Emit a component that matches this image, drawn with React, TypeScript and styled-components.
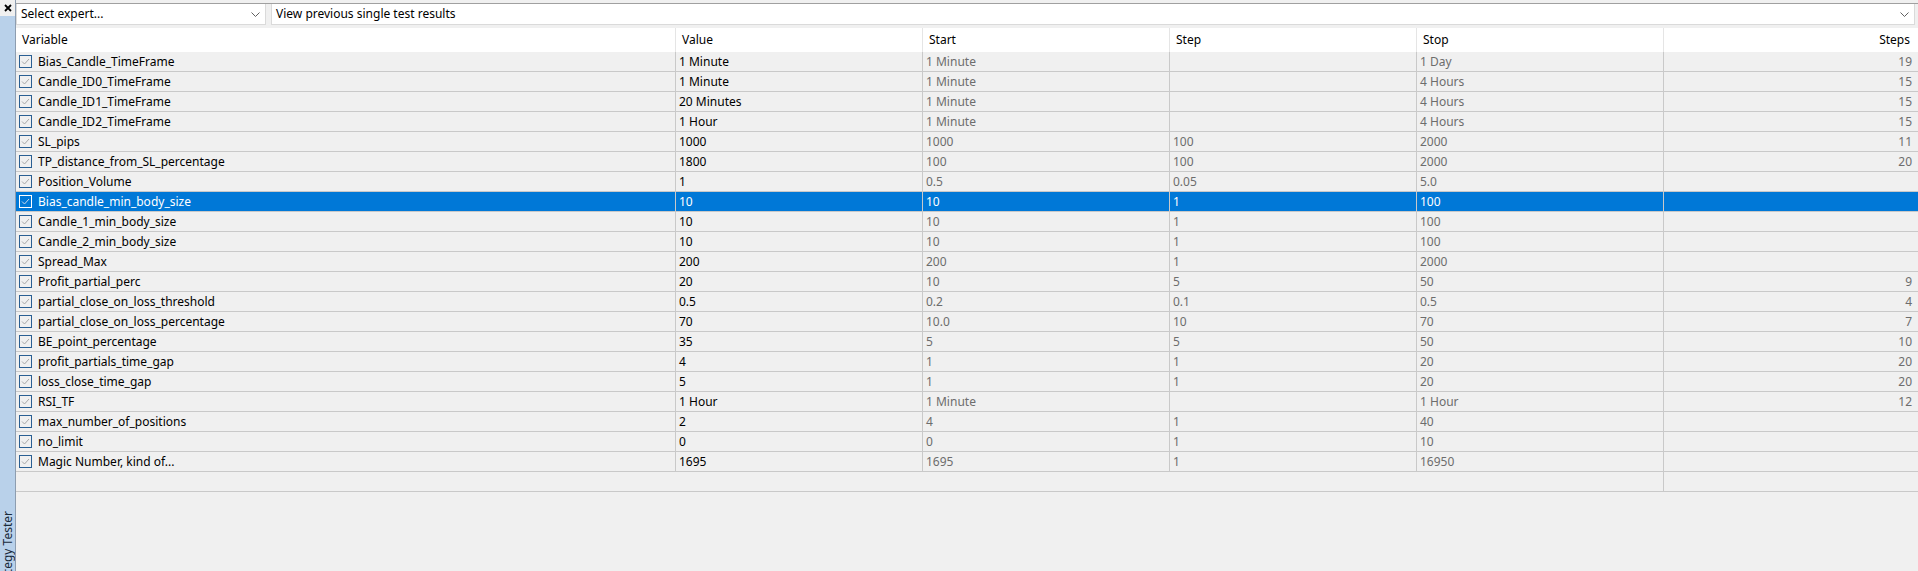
import * as React from 'react';
import styled, { createGlobalStyle } from 'styled-components';

type Param = {
  name: string;
  value: string;
  start: string;
  step: string;
  stop: string;
  steps: string;
};

const params: Param[] = [
  { name: 'Bias_Candle_TimeFrame', value: '1 Minute', start: '1 Minute', step: '', stop: '1 Day', steps: '19' },
  { name: 'Candle_ID0_TimeFrame', value: '1 Minute', start: '1 Minute', step: '', stop: '4 Hours', steps: '15' },
  { name: 'Candle_ID1_TimeFrame', value: '20 Minutes', start: '1 Minute', step: '', stop: '4 Hours', steps: '15' },
  { name: 'Candle_ID2_TimeFrame', value: '1 Hour', start: '1 Minute', step: '', stop: '4 Hours', steps: '15' },
  { name: 'SL_pips', value: '1000', start: '1000', step: '100', stop: '2000', steps: '11' },
  { name: 'TP_distance_from_SL_percentage', value: '1800', start: '100', step: '100', stop: '2000', steps: '20' },
  { name: 'Position_Volume', value: '1', start: '0.5', step: '0.05', stop: '5.0', steps: '' },
  { name: 'Bias_candle_min_body_size', value: '10', start: '10', step: '1', stop: '100', steps: '' },
  { name: 'Candle_1_min_body_size', value: '10', start: '10', step: '1', stop: '100', steps: '' },
  { name: 'Candle_2_min_body_size', value: '10', start: '10', step: '1', stop: '100', steps: '' },
  { name: 'Spread_Max', value: '200', start: '200', step: '1', stop: '2000', steps: '' },
  { name: 'Profit_partial_perc', value: '20', start: '10', step: '5', stop: '50', steps: '9' },
  { name: 'partial_close_on_loss_threshold', value: '0.5', start: '0.2', step: '0.1', stop: '0.5', steps: '4' },
  { name: 'partial_close_on_loss_percentage', value: '70', start: '10.0', step: '10', stop: '70', steps: '7' },
  { name: 'BE_point_percentage', value: '35', start: '5', step: '5', stop: '50', steps: '10' },
  { name: 'profit_partials_time_gap', value: '4', start: '1', step: '1', stop: '20', steps: '20' },
  { name: 'loss_close_time_gap', value: '5', start: '1', step: '1', stop: '20', steps: '20' },
  { name: 'RSI_TF', value: '1 Hour', start: '1 Minute', step: '', stop: '1 Hour', steps: '12' },
  { name: 'max_number_of_positions', value: '2', start: '4', step: '1', stop: '40', steps: '' },
  { name: 'no_limit', value: '0', start: '0', step: '1', stop: '10', steps: '' },
  { name: 'Magic Number, kind of...', value: '1695', start: '1695', step: '1', stop: '16950', steps: '' },
];

const SELECTED = 7;

export default function App() {
  return (
    <>
      <GlobalStyle />
      <Wrap>
        <Sidebar>
          <CloseBtn>
            <svg width="8" height="8" viewBox="0 0 8 8">
              <path d="M1 1L7 7M7 1L1 7" stroke="#000" strokeWidth="1.8" />
            </svg>
          </CloseBtn>
          <SideBar>
            <SideLabel>Strategy Tester</SideLabel>
          </SideBar>
        </Sidebar>

        <Main>
          <Toolbar>
            <Dropdown $width="250px">
              <span>Select expert...</span>
              <Chevron />
            </Dropdown>
            <Dropdown>
              <span>View previous single test results</span>
              <Chevron />
            </Dropdown>
          </Toolbar>

          <HeadRow>
            <HeadCell>Variable</HeadCell>
            <HeadCell>Value</HeadCell>
            <HeadCell>Start</HeadCell>
            <HeadCell>Step</HeadCell>
            <HeadCell>Stop</HeadCell>
            <HeadCell $right>Steps</HeadCell>
          </HeadRow>

          {params.map((p, i) => {
            const sel = i === SELECTED;
            return (
              <Row key={p.name} $selected={sel}>
                <NameCell>
                  <CheckBox $selected={sel}>
                    <svg width="9" height="7" viewBox="0 0 9 7">
                      <path d="M1 3.5L3.5 6L8 1" fill="none" stroke={sel ? '#c8d8ea' : '#a8a8a8'} strokeWidth="1" />
                    </svg>
                  </CheckBox>
                  {p.name}
                </NameCell>
                <Cell>{p.value}</Cell>
                <Cell $muted={!sel}>{p.start}</Cell>
                <Cell $muted={!sel}>{p.step}</Cell>
                <Cell $muted={!sel}>{p.stop}</Cell>
                <Cell $muted={!sel} $right>{p.steps}</Cell>
              </Row>
            );
          })}
          <Row>
            <Cell $span={5} />
            <Cell />
          </Row>
        </Main>
      </Wrap>
    </>
  );
}

function Chevron() {
  return (
    <svg width="9" height="5" viewBox="0 0 9 5">
      <path d="M0.5 0.5L4.5 4.5L8.5 0.5" fill="none" stroke="#606060" strokeWidth="1" />
    </svg>
  );
}

const GlobalStyle = createGlobalStyle`
  html, body {
    margin: 0;
    padding: 0;
    background: #f0f0f0;
    font-family: "Noto Sans", "Open Sans", sans-serif;
    font-size: 12px;
    color: #000;
  }
`;

const Wrap = styled.div`
  display: flex;
  height: 100vh;
  overflow: hidden;
  background: #f0f0f0;
`;

const Sidebar = styled.div`
  display: flex;
  flex-direction: column;
  width: 15px;
  flex: none;
  border-right: 1px solid #8d9db0;
`;

const CloseBtn = styled.div`
  height: 16px;
  display: flex;
  align-items: center;
  justify-content: center;
  background: #f0f0f0;
`;

const SideBar = styled.div`
  flex: 1;
  display: flex;
  flex-direction: column;
  justify-content: flex-end;
  align-items: center;
  background: #b9d1ea;
  overflow: hidden;
`;

const SideLabel = styled.div`
  writing-mode: vertical-rl;
  transform: rotate(180deg);
  white-space: nowrap;
  font-size: 12px;
  line-height: 14px;
  color: #1a2a3a;
  margin-bottom: -24px;
`;

const Main = styled.div`
  flex: 1;
  display: flex;
  flex-direction: column;
  min-width: 0;
`;

const Toolbar = styled.div`
  display: flex;
  gap: 5px;
  margin-top: 3px;
  padding-right: 3px;
  border-top: 1px solid #a0a0a0;
  height: 24px;
`;

const Dropdown = styled.div<{ $width?: string }>`
  display: flex;
  align-items: center;
  justify-content: space-between;
  box-sizing: border-box;
  width: ${(p) => p.$width || 'auto'};
  flex: ${(p) => (p.$width ? 'none' : '1')};
  height: 21px;
  padding: 0 5px 0 4px;
  background: #fff;
  border: 1px solid #dadada;
  border-top: none;
  line-height: 20px;
`;

const grid = `
  display: grid;
  grid-template-columns: 660px 247px 247px 247px 247px 1fr;
`;

const HeadRow = styled.div`
  ${grid}
  height: 24px;
  background: #fff;
`;

const HeadCell = styled.div<{ $right?: boolean }>`
  padding: 0 8px 0 6px;
  line-height: 24px;
  border-right: 1px solid #e5e5e5;
  text-align: ${(p) => (p.$right ? 'right' : 'left')};
  &:last-child {
    border-right: none;
  }
`;

const Row = styled.div<{ $selected?: boolean }>`
  ${grid}
  height: 20px;
  box-sizing: border-box;
  border-bottom: 1px solid #c9c9c9;
  background: ${(p) => (p.$selected ? '#0078d7' : '#f0f0f0')};
  color: ${(p) => (p.$selected ? '#fff' : '#000')};
`;

const Cell = styled.div<{ $muted?: boolean; $right?: boolean; $span?: number }>`
  grid-column: ${(p) => (p.$span ? `span ${p.$span}` : 'auto')};
  padding: 0 6px 0 3px;
  line-height: 19px;
  white-space: nowrap;
  overflow: hidden;
  border-right: 1px solid #c9c9c9;
  color: ${(p) => (p.$muted ? '#6d6d6d' : 'inherit')};
  text-align: ${(p) => (p.$right ? 'right' : 'left')};
  &:last-child {
    border-right: none;
  }
`;

const NameCell = styled.div`
  display: flex;
  align-items: center;
  gap: 6px;
  padding-left: 3px;
  line-height: 19px;
  white-space: nowrap;
  border-right: 1px solid #c9c9c9;
`;

const CheckBox = styled.span<{ $selected?: boolean }>`
  display: inline-flex;
  align-items: center;
  justify-content: center;
  box-sizing: border-box;
  width: 13px;
  height: 13px;
  border: 1px solid ${(p) => (p.$selected ? '#ffffff' : '#2a5f93')};
  background: transparent;
`;
